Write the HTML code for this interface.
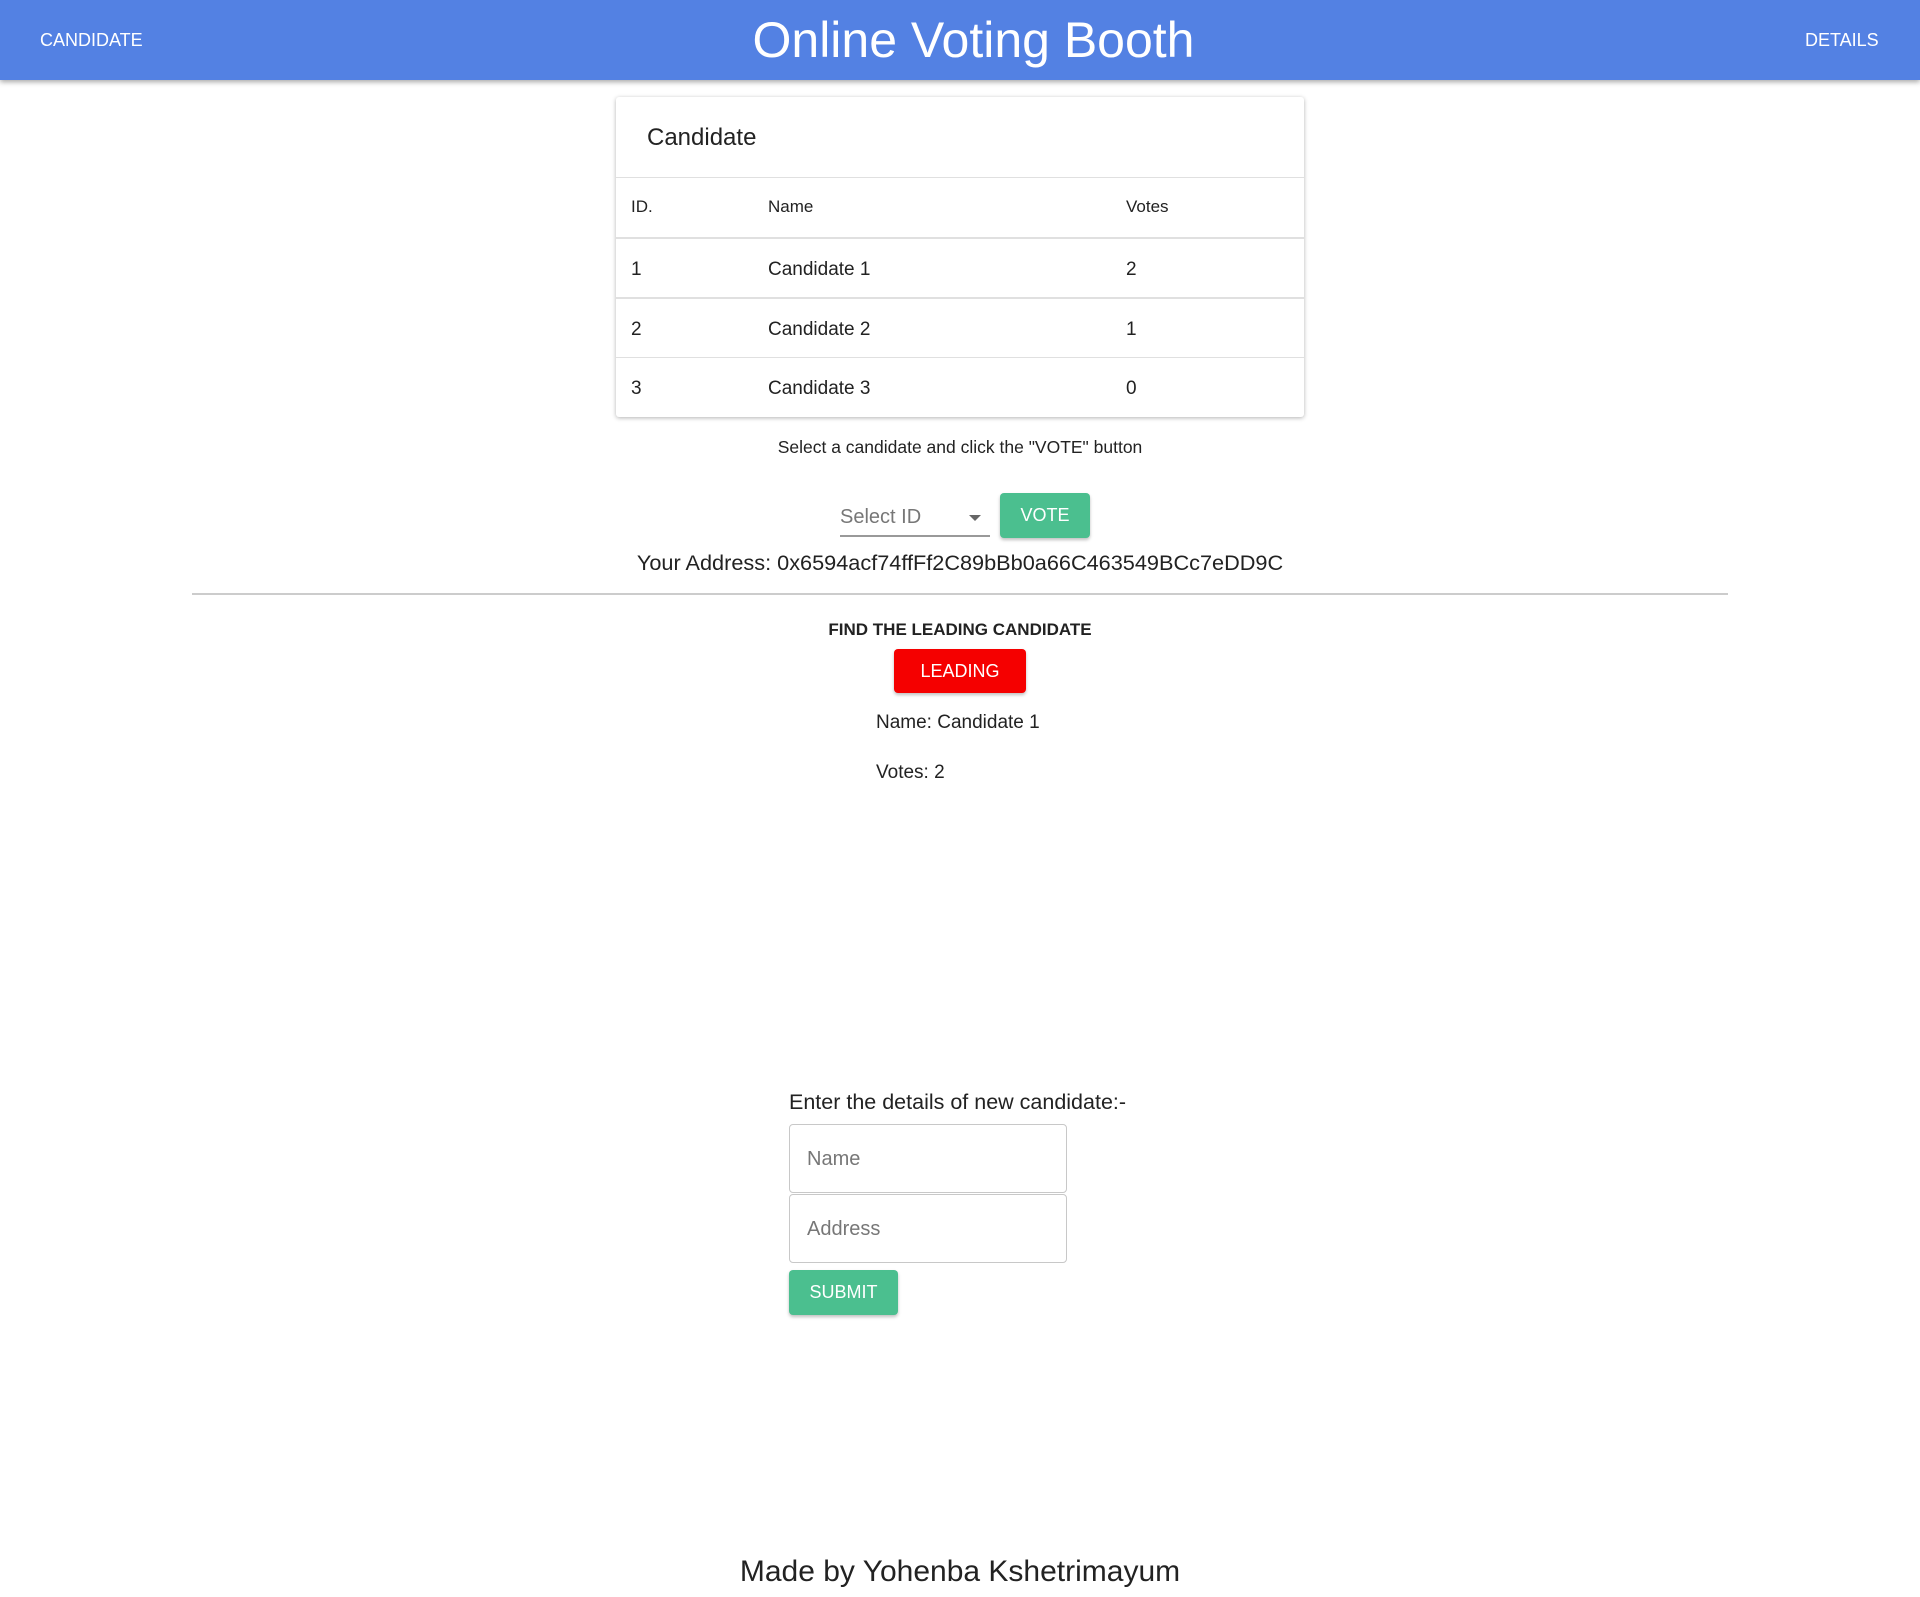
<!DOCTYPE html>
<html><head><meta charset="utf-8"><style>
*{margin:0;padding:0;box-sizing:border-box}
body{width:1920px;height:1597px;background:#fff;font-family:"Liberation Sans",Arial,sans-serif;position:relative;overflow:hidden;color:#222}
.a{position:absolute}
.hdr{left:0;top:0;width:1920px;height:80px;background:#5381e3;box-shadow:0 2px 5px rgba(0,0,0,.35)}
.card{left:616px;top:97px;width:688px;height:320px;background:#fff;box-shadow:0 1px 4px rgba(0,0,0,.3);border-radius:3px}
.line{height:1px;background:#e0e0e0;left:0;width:688px}
.btn{color:#fff;text-align:center;border-radius:4px;box-shadow:0 2px 3px rgba(0,0,0,.25);font-size:18px}
.inp{border:1px solid #c8c8c8;border-radius:4px;width:278px;height:69px;left:789px;color:#777;font-size:20px;padding-left:17px;line-height:69px}
</style></head><body>
<div class="a hdr"></div>
<div class="a" style="left:40px;top:30px;font-size:18px;color:#fff">CANDIDATE</div>
<div class="a" style="left:0;width:1947px;text-align:center;top:11px;font-size:50px;color:#fff">Online Voting Booth</div>
<div class="a" style="left:1805px;top:30px;font-size:18px;color:#fff">DETAILS</div>

<div class="a card">
<div class="a" style="left:31px;top:27px;font-size:24px;color:#222">Candidate</div>
<div class="a line" style="top:80px"></div>
<div class="a" style="left:15px;top:100px;font-size:17px">ID.</div>
<div class="a" style="left:152px;top:100px;font-size:17px">Name</div>
<div class="a" style="left:510px;top:100px;font-size:17px">Votes</div>
<div class="a line" style="top:140px;height:2px"></div>
<div class="a" style="left:15px;top:162px;font-size:19px">1</div>
<div class="a" style="left:152px;top:162px;font-size:19px">Candidate 1</div>
<div class="a" style="left:510px;top:162px;font-size:19px">2</div>
<div class="a line" style="top:200px;height:2px"></div>
<div class="a" style="left:15px;top:222px;font-size:19px">2</div>
<div class="a" style="left:152px;top:222px;font-size:19px">Candidate 2</div>
<div class="a" style="left:510px;top:222px;font-size:19px">1</div>
<div class="a line" style="top:260px"></div>
<div class="a" style="left:15px;top:281px;font-size:19px">3</div>
<div class="a" style="left:152px;top:281px;font-size:19px">Candidate 3</div>
<div class="a" style="left:510px;top:281px;font-size:19px">0</div>
</div>

<div class="a" style="left:0;width:1920px;text-align:center;top:437px;font-size:17.5px">Select a candidate and click the "VOTE" button</div>
<div class="a" style="left:840px;top:506px;font-size:20px;color:#777">Select ID</div>
<div class="a" style="left:969px;top:515px;width:0;height:0;border-left:6px solid transparent;border-right:6px solid transparent;border-top:6px solid #666"></div>
<div class="a" style="left:840px;top:535px;width:150px;height:2px;background:#999"></div>
<div class="a btn" style="left:1000px;top:493px;width:90px;height:45px;line-height:45px;background:#4bbf8f">VOTE</div>
<div class="a" style="left:0;width:1920px;text-align:center;top:550px;font-size:21.7px;color:#222">Your Address: 0x6594acf74ffFf2C89bBb0a66C463549BCc7eDD9C</div>
<div class="a" style="left:192px;top:593px;width:1536px;height:2px;background:#ccc"></div>
<div class="a" style="left:0;width:1920px;text-align:center;top:620px;font-size:17px;font-weight:bold">FIND THE LEADING CANDIDATE</div>
<div class="a btn" style="left:894px;top:649px;width:132px;height:44px;line-height:44px;background:#f50000">LEADING</div>
<div class="a" style="left:876px;top:712px;font-size:19px">Name: Candidate 1</div>
<div class="a" style="left:876px;top:762px;font-size:19px">Votes: 2</div>

<div class="a" style="left:789px;top:1090px;font-size:21.5px">Enter the details of new candidate:-</div>
<div class="a inp" style="top:1124px">Name</div>
<div class="a inp" style="top:1194px">Address</div>
<div class="a btn" style="left:789px;top:1270px;width:109px;height:45px;line-height:45px;background:#4bbf8f">SUBMIT</div>

<div class="a" style="left:0;width:1920px;text-align:center;top:1555px;font-size:30px;color:#222">Made by Yohenba Kshetrimayum</div>
</body></html>
